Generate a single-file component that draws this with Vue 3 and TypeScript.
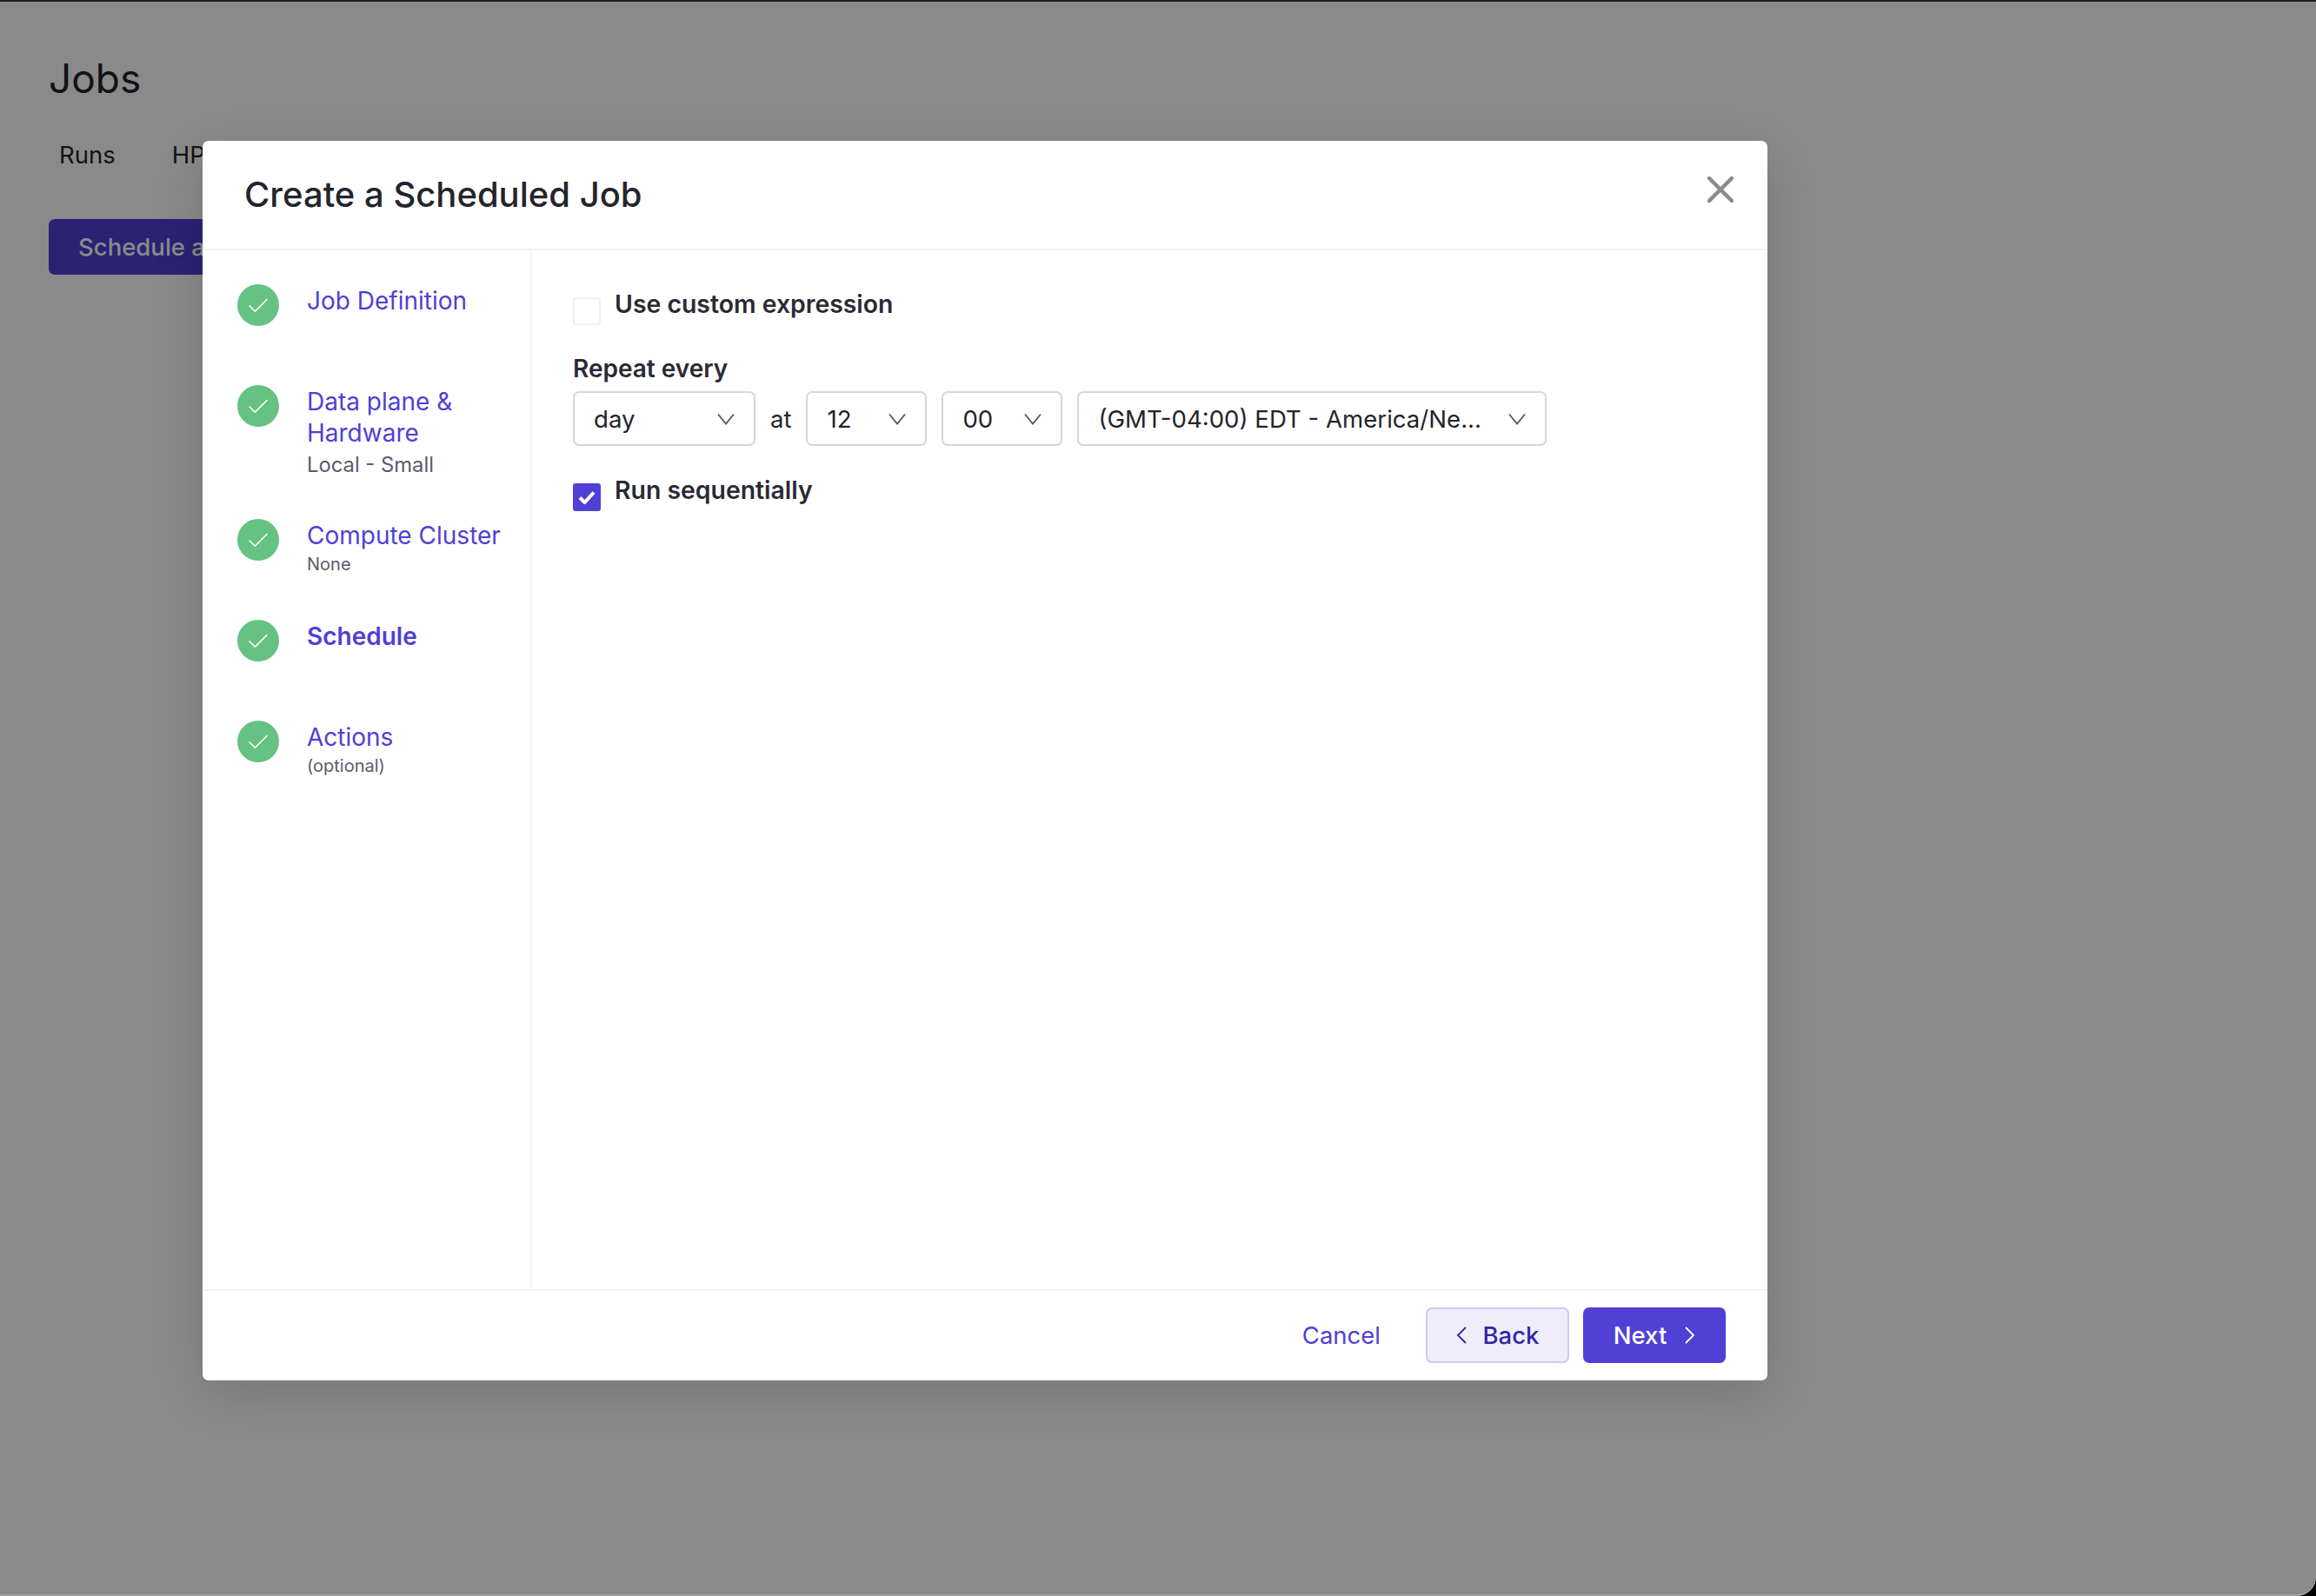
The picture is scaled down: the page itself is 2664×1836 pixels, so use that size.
<template>
  <div class="screen">
    <div class="page">
      <h1 class="page-title">Jobs</h1>
      <div class="tabs">
        <span class="tab">Runs</span>
        <span class="tab">HPO</span>
      </div>
      <div class="page-actions">
        <button class="schedule-btn">Schedule a Job</button>
      </div>
    </div>

    <div class="overlay"></div>

    <div class="modal">
      <header class="modal-header">
        <h2 class="modal-title">Create a Scheduled Job</h2>
        <button class="close-btn" title="Close">
          <svg viewBox="0 0 30 30" width="30" height="30">
            <path d="M2 2 28 28M28 2 2 28" />
          </svg>
        </button>
      </header>

      <div class="modal-body">
        <nav class="steps">
          <div v-for="step in steps" :key="step.label" class="step">
            <span class="step-icon">
              <svg viewBox="0 0 24 18" width="24" height="18">
                <path d="M1.5 9.5 8.5 16 22.5 2" />
              </svg>
            </span>
            <div class="step-text">
              <div class="step-label" :class="{ current: step.current }">{{ step.label }}</div>
              <div v-if="step.sub" class="step-sub" :class="{ large: step.large }">{{ step.sub }}</div>
            </div>
          </div>
        </nav>

        <section class="content">
          <label class="check-row">
            <span class="checkbox"></span>
            <span class="check-label">Use custom expression</span>
          </label>

          <div class="field-label">Repeat every</div>
          <div class="select-row">
            <div class="select select-day">
              <span class="select-value">day</span>
              <svg class="chevron" viewBox="0 0 20 14" width="20" height="14"><path d="M1 1.5 10 12.5 19 1.5" /></svg>
            </div>
            <span class="at">at</span>
            <div class="select select-time">
              <span class="select-value">12</span>
              <svg class="chevron" viewBox="0 0 20 14" width="20" height="14"><path d="M1 1.5 10 12.5 19 1.5" /></svg>
            </div>
            <div class="select select-time">
              <span class="select-value">00</span>
              <svg class="chevron" viewBox="0 0 20 14" width="20" height="14"><path d="M1 1.5 10 12.5 19 1.5" /></svg>
            </div>
            <div class="select select-zone">
              <span class="select-value">(GMT-04:00) EDT - America/Ne...</span>
              <svg class="chevron" viewBox="0 0 20 14" width="20" height="14"><path d="M1 1.5 10 12.5 19 1.5" /></svg>
            </div>
          </div>

          <label class="check-row sequential">
            <span class="checkbox checked">
              <svg viewBox="0 0 20 16" width="20" height="16"><path d="M2 8.5 7.5 14 18 2.5" /></svg>
            </span>
            <span class="check-label">Run sequentially</span>
          </label>
        </section>
      </div>

      <footer class="modal-footer">
        <button class="btn-cancel">Cancel</button>
        <button class="btn-back">
          <svg viewBox="0 0 12 20" width="12" height="20"><path d="M11 1 2 10 11 19" /></svg>
          Back
        </button>
        <button class="btn-next">
          Next
          <svg viewBox="0 0 12 20" width="12" height="20"><path d="M1 1 10 10 1 19" /></svg>
        </button>
      </footer>
    </div>
  </div>
</template>

<script setup lang="ts">
interface Step {
  label: string
  sub?: string
  large?: boolean
  current?: boolean
}

const steps: Step[] = [
  { label: 'Job Definition' },
  { label: 'Data plane & Hardware', sub: 'Local - Small', large: true },
  { label: 'Compute Cluster', sub: 'None' },
  { label: 'Schedule', current: true },
  { label: 'Actions', sub: '(optional)' },
]
</script>

<style>
html,
body {
  margin: 0;
  background: #000;
  overflow: hidden;
}
</style>

<style scoped>
* {
  box-sizing: border-box;
}

.screen {
  position: relative;
  width: 2664px;
  height: 1836px;
  overflow: hidden;
  background: #fff;
  border-top: 2px solid #1e1e26;
  border-radius: 0 0 22px 0;
  font-family: Inter, "Liberation Sans", sans-serif;
  color: #24242c;
}

.page {
  padding: 0 56px;
}

.page-title {
  margin: 56px 0 0;
  font-size: 46px;
  line-height: 64px;
  font-weight: 400;
}

.tabs {
  display: flex;
  gap: 65px;
  margin-top: 38px;
  padding: 0 12px 16px;
  height: 60px;
  border-bottom: 2px solid #fbfbfb;
  font-size: 27.5px;
  line-height: 36px;
}

.page-actions {
  margin-top: 32px;
}

.schedule-btn {
  width: 340px;
  height: 64px;
  padding: 0 34px;
  border: none;
  border-radius: 7px;
  background: #5140d6;
  color: #fff;
  text-align: left;
  font: 500 27.5px Inter, sans-serif;
}

.overlay {
  position: absolute;
  inset: 0;
  background: rgba(0, 0, 0, 0.46);
  border-bottom: 2px solid rgba(255, 255, 255, 0.16);
  border-radius: inherit;
}

.modal {
  position: absolute;
  left: 233px;
  top: 160px;
  width: 1800px;
  height: 1426px;
  display: flex;
  flex-direction: column;
  background: #fff;
  border-radius: 7px;
  box-shadow: 0 16px 60px rgba(0, 0, 0, 0.14);
}

.modal-header {
  display: flex;
  justify-content: space-between;
  height: 126px;
  padding: 38px 39px 0 48px;
  border-bottom: 2px solid #f2f2f2;
}

.modal-title {
  margin: 0;
  font-size: 40px;
  line-height: 48px;
  font-weight: 500;
}

.close-btn {
  width: 30px;
  height: 30px;
  margin-top: 3px;
  padding: 0;
  border: none;
  background: none;
}

.close-btn svg {
  display: block;
}

.close-btn path {
  fill: none;
  stroke: #8a8a8a;
  stroke-width: 4.5;
  stroke-linecap: round;
}

.modal-body {
  flex: 1;
  display: flex;
  min-height: 0;
}

.steps {
  width: 379px;
  padding: 39px 28px 0 40px;
  border-right: 2px solid #f5f5f5;
}

.step {
  display: flex;
  gap: 32px;
  min-height: 116px;
  padding-bottom: 44px;
}

.step-icon {
  flex: none;
  display: flex;
  align-items: center;
  justify-content: center;
  width: 48px;
  height: 48px;
  border-radius: 50%;
  background: #65c282;
}

.step-icon path {
  fill: none;
  stroke: #fff;
  stroke-width: 1.7;
}

.step-text {
  padding-top: 1px;
}

.step-label {
  font-size: 28px;
  line-height: 36px;
  color: #4f3fd6;
}

.step-label.current {
  font-weight: 600;
}

.step-sub {
  font-size: 20px;
  line-height: 30px;
  color: #5b5b6b;
}

.step-sub.large {
  font-size: 23.8px;
  line-height: 37px;
}

.content {
  flex: 1;
  padding: 44px 47px;
}

.check-row {
  display: flex;
  gap: 16px;
}

.checkbox {
  flex: none;
  display: flex;
  align-items: center;
  justify-content: center;
  width: 32px;
  height: 32px;
  margin-top: 10px;
  border: 2px solid #f0f0f0;
  border-radius: 3px;
}

.checkbox.checked {
  border: none;
  background: #5140d6;
}

.checkbox path {
  fill: none;
  stroke: #fff;
  stroke-width: 4;
}

.check-label {
  font-size: 28.4px;
  line-height: 36px;
  font-weight: 600;
  color: #2a2a34;
}

.field-label {
  margin-top: 32px;
  font-size: 28px;
  line-height: 36px;
  font-weight: 600;
  color: #2a2a34;
}

.select-row {
  display: flex;
  align-items: center;
  margin-top: 8px;
}

.select {
  display: flex;
  align-items: center;
  justify-content: space-between;
  height: 63px;
  padding: 0 22px 0 22px;
  border: 2px solid #d6d6d6;
  border-radius: 7px;
  font-size: 27.6px;
}

.select-day {
  width: 210px;
}

.select-time {
  width: 139px;
  margin-right: 17px;
}

.select-zone {
  width: 540px;
}

.select-value {
  white-space: nowrap;
}

.chevron path {
  fill: none;
  stroke: #55556a;
  stroke-width: 1.8;
}

.at {
  margin: 0 17px 0 17px;
  font-size: 27.5px;
}

.sequential {
  margin-top: 33px;
}

.modal-footer {
  display: flex;
  align-items: center;
  justify-content: flex-end;
  height: 105px;
  padding: 0 48px 2px 0;
  border-top: 2px solid #f2f2f2;
}

.modal-footer button {
  display: flex;
  align-items: center;
  justify-content: center;
  height: 64px;
  font: 500 27.5px Inter, sans-serif;
  border-radius: 7px;
}

.modal-footer .btn-cancel {
  margin-right: 52px;
  padding: 0;
  border: none;
  background: none;
  color: #4f3fd6;
  font-weight: 400;
}

.btn-back {
  width: 165px;
  margin-right: 16px;
  gap: 19px;
  border: 2px solid #cfc9f3;
  background: #efedfa;
  color: #3225a5;
}

.btn-back path,
.btn-next path {
  fill: none;
  stroke: currentColor;
  stroke-width: 1.8;
}

.btn-next {
  width: 164px;
  gap: 21px;
  border: none;
  background: #5140d6;
  color: #fff;
}
</style>
